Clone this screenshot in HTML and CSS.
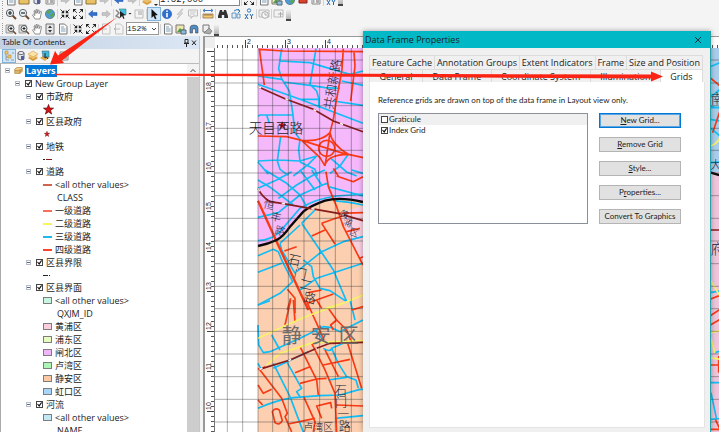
FILE: index.html
```html
<!DOCTYPE html>
<html lang="en">
<head>
<meta charset="utf-8">
<title>Data Frame Properties</title>
<link rel="stylesheet" href="styles.css">
</head>
<body>
<svg class="defs" aria-hidden="true">
  <symbol id="zin" viewBox="0 0 12 12"><path d="M7 7l4 4" stroke="#6b4a2e" stroke-width="2"/><circle cx="5" cy="5" r="3.6" fill="#e8f4fa" stroke="#555"/><path d="M3 5h4M5 3v4" stroke="#222" stroke-width="1.2"/></symbol>
  <symbol id="zout" viewBox="0 0 12 12"><path d="M7 7l4 4" stroke="#6b4a2e" stroke-width="2"/><circle cx="5" cy="5" r="3.6" fill="#e8f4fa" stroke="#666"/><path d="M3 5h4" stroke="#222" stroke-width="1.2"/></symbol>
  <symbol id="hand" viewBox="0 0 12 12"><path d="M4 11L1.500 7l1-.8L4 7.500 3 3l1-.5 1 3V1.500h1.200v3.700L7.200 2l1 .2-.2 3.500 1.500-2.500 1 .5L9 11z" fill="#fff" stroke="#777" stroke-width=".8"/></symbol>
  <symbol id="globe" viewBox="0 0 12 12"><circle cx="6" cy="6" r="4.600" fill="#4c9bd8" stroke="#4a6a80" stroke-width=".7"/><path d="M3 3q3-2 4 0L6 5 4 6 2 5zM6 7l3-2 1 2-2 3-1-.5z" fill="#5aa84a"/></symbol>
  <symbol id="shrink" viewBox="0 0 12 12"><path d="M1.500 1.500l3 3M10.500 1.500l-3 3M1.500 10.500l3-3M10.500 10.500l-3-3" stroke="#333"/><path d="M5.200 2v3.200H2zM6.800 2v3.200H10zM5.200 10V6.800H2zM6.800 10V6.800H10z" fill="#222"/></symbol>
  <symbol id="grow" viewBox="0 0 12 12"><path d="M2 2l3 3M10 2L7 5M2 10l3-3M10 10L7 7" stroke="#555"/><path d="M1 1h3.500L1 4.500zM11 1H7.500L11 4.500zM1 11h3.500L1 7.500zM11 11H7.500L11 7.500z" fill="#222"/></symbol>
  <symbol id="back" viewBox="0 0 12 12"><path d="M1.500 6l4-3.500v2H10v3H5.500v2z" fill="#2f6fd0" stroke="#1d4fa0" stroke-width=".5"/></symbol>
  <symbol id="fwd" viewBox="0 0 12 12"><path d="M10.500 6l-4-3.500v2H2v3h4.500v2z" fill="#c4c4c4" stroke="#aaa" stroke-width=".5"/></symbol>
  <symbol id="selfeat" viewBox="0 0 12 12"><path d="M1 2l3 3-3 3 4 2" fill="none" stroke="#888" stroke-width="1.500"/><path d="M4 1h7v6H8z" fill="#42c3e0" stroke="#3a7f90" stroke-width=".6"/><path d="M5 3v7l2-2 1.500 3 1-.5L8.300 7.600 10.500 7z" fill="#222"/></symbol>
  <symbol id="clear" viewBox="0 0 12 12"><path d="M2 2h8v8H2z" fill="#f5f5f5" stroke="#bbb"/><path d="M5 3h4v4H5z" fill="#ccc"/></symbol>
  <symbol id="cursor" viewBox="0 0 12 12"><path d="M3.500 1v9l2-2 1.500 3.300 1.500-.7-1.500-3.200 2.800-.3z" fill="#111"/></symbol>
  <symbol id="info" viewBox="0 0 12 12"><circle cx="6" cy="6" r="4.700" fill="#2f6fd0" stroke="#24559f" stroke-width=".5"/><path d="M6 2.500v1.600M6 5v4.200" stroke="#fff" stroke-width="1.600"/></symbol>
  <symbol id="bolt" viewBox="0 0 12 12"><path d="M8 1L3 6.500h2.500L3 11l6-6H6.500L9 1z" fill="#d6d6d6" stroke="#b5b5b5" stroke-width=".5"/></symbol>
  <symbol id="bubble" viewBox="0 0 12 12"><path d="M1.500 2h9v6H6l-2 2.500V8H1.500z" fill="#f3f3f3" stroke="#bbb"/><path d="M3 4h6M3 6h5" stroke="#ccc"/></symbol>
  <symbol id="measure" viewBox="0 0 12 12"><path d="M1 2.500h10M3 1L1 2.500 3 4M9 1l2 1.500L9 4" fill="none" stroke="#3b7cc4"/><path d="M1 6h10v4H1z" fill="#f0c878" stroke="#8a6a3a" stroke-width=".7"/><path d="M3 6v2M5 6v2M7 6v2M9 6v2" stroke="#6a4a2a" stroke-width=".6"/></symbol>
  <symbol id="binoc" viewBox="0 0 12 12"><path d="M3 2h2l.5 2h1L7 2h2l2 6v2H7.200V7H4.800v3H1V8z" fill="#333"/></symbol>
  <symbol id="route" viewBox="0 0 12 12"><path d="M2 5h4v5H2zM7 6h3v4H7z" fill="#e6eef5" stroke="#4b86b8" stroke-width=".8"/><path d="M4 3q3-3 6 0M8 1l2 2-2 2" fill="none" stroke="#2f7bc4"/></symbol>
  <symbol id="xy" viewBox="0 0 12 12"><circle cx="6" cy="2.500" r="1.700" fill="none" stroke="#2b7bbf"/><path d="M2 6l3 5M5 6l-3 5M7 6l1.500 2.500L10 6M8.500 8v3" fill="none" stroke="#1f68b0"/></symbol>
  <symbol id="clock" viewBox="0 0 12 12"><path d="M1 2h10v7H1z" fill="#eee" stroke="#bbb"/><circle cx="7" cy="7" r="3.300" fill="#f8f8f8" stroke="#aaa"/><path d="M7 5v2h2" fill="none" stroke="#aaa"/></symbol>
  <symbol id="newwin" viewBox="0 0 12 12"><path d="M1 2h9v7H1z" fill="#f3f3f3" stroke="#bbb"/><path d="M5 6h5M7.500 4v5" stroke="#aaa"/></symbol>
  <symbol id="pzin" viewBox="0 0 12 12"><path d="M1 2h7v8H1z" fill="#ddd" stroke="#888" stroke-width=".8"/><circle cx="6" cy="5.500" r="3" fill="#eef6fa" stroke="#555"/><path d="M8 8l3 3" stroke="#6b4a2e" stroke-width="1.600"/><path d="M4.500 5.500h3M6 4v3" stroke="#222"/></symbol>
  <symbol id="page" viewBox="0 0 12 12"><path d="M2.500 1h5l2.500 2.500V11H2.500z" fill="#fafafa" stroke="#777"/><path d="M4 4h3M4 6h4.500M4 8h4.500" stroke="#7fa0bd"/></symbol>
  <symbol id="pageg" viewBox="0 0 12 12"><path d="M2.500 1h5l2.500 2.500V11H2.500z" fill="#f4f4f4" stroke="#c3c3c3"/><path d="M7 6H1M3 4L1 6l2 2" fill="none" stroke="#bbb"/></symbol>
  <symbol id="pagefit" viewBox="0 0 12 12"><path d="M2 1h8v10H2z" fill="#e6e6e6" stroke="#777"/><path d="M6 2.500L8 5H4zM6 9.500L8 7H4z" fill="#333"/></symbol>
  <symbol id="pic" viewBox="0 0 12 12"><path d="M1 2h8v8H1z" fill="#f2e6b0" stroke="#777"/><path d="M2 9l3-4 2 2 2-2v4z" fill="#4fa04a"/><path d="M6 7h5v4H6z" fill="#8db9dd" stroke="#567"/></symbol>
  <symbol id="mag" viewBox="0 0 12 12"><path d="M2 10V5q0-3 4-3t4 3v5H7.500V6h-3v4z" fill="#4d8fc4" stroke="#445" stroke-width=".6"/></symbol>
  <symbol id="tool" viewBox="0 0 12 12"><path d="M2 2h6v7H2z" fill="#eee" stroke="#777"/><path d="M3 10l5-5 3 3-2 3z" fill="#aaa" stroke="#666" stroke-width=".6"/></symbol>
  <symbol id="tree" viewBox="0 0 12 12"><path d="M2 1h3v3H2zM5 5h3v3H5z" fill="#f2c66a" stroke="#b98a3a" stroke-width=".6"/><path d="M3 4v6h3M3 7h2M8 10h3M9 3h2" fill="none" stroke="#888" stroke-width=".8"/></symbol>
  <symbol id="cyl" viewBox="0 0 12 12"><path d="M3 3v6q3 2 6 0V3z" fill="#dfe4ec" stroke="#667"/><ellipse cx="6" cy="3" rx="3" ry="1.500" fill="#f8f8f8" stroke="#667"/><path d="M6 6h3v4H6z" fill="#555f9a"/></symbol>
  <symbol id="layers" viewBox="0 0 12 12"><path d="M1 8l5-3 5 3-5 3z" fill="#d79a35"/><path d="M1 6l5-3 5 3-5 3z" fill="#efc473"/><path d="M1 4l5-3 5 3-5 3z" fill="#fbe3a8" stroke="#c8923a" stroke-width=".5"/></symbol>
  <symbol id="sel" viewBox="0 0 12 12"><path d="M1 8l4-3 6 2-5 4z" fill="#e0aa50"/><path d="M3 1h7v6H4z" fill="#42b8d8" stroke="#3a6f80" stroke-width=".6"/><path d="M6 3v5l1.500-1L9 9" fill="none" stroke="#222"/></symbol>
  <symbol id="opts" viewBox="0 0 12 12"><path d="M2 2h8v8H2z" fill="#f4f4f4" stroke="#888"/><path d="M3 4h1.500M6 4h3M3 6h1.500M6 6h3M3 8h1.500M6 8h3" stroke="#666"/></symbol>
  <symbol id="frame" viewBox="0 0 12 12"><path d="M1 4l3-2h7v5L8 10H1z" fill="#f2cf86" stroke="#a8772b" stroke-width=".8"/><path d="M1 6h7l3-2M1 8h7l3-2M8 4v6" fill="none" stroke="#a8772b" stroke-width=".8"/></symbol>
  <symbol id="star" viewBox="0 0 12 12"><path d="M6 .5l1.400 3.900 4.100.1-3.300 2.500 1.200 4L6 8.600 2.600 11l1.200-4L.5 4.500l4.100-.1z" fill="#e01010" stroke="#400" stroke-width=".7"/></symbol>
  <symbol id="folder" viewBox="0 0 12 12"><path d="M1 3h4l1 1h5v6H1z" fill="#e9c268" stroke="#8f7335"/></symbol>
</svg>

<div class="app">
  <header class="toolbars">
    <div class="bar bar-top">
      <i class="grip"></i>
      <button aria-label="New"><svg><use href="#page"/></svg></button>
      <button aria-label="Open"><svg><use href="#folder"/></svg></button>
      <button aria-label="Save"><svg><use href="#cyl"/></svg></button>
      <button aria-label="Print"><svg><use href="#opts"/></svg></button>
      <i class="sep"></i>
      <button aria-label="Cut"><svg><use href="#fwd"/></svg></button>
      <button aria-label="Copy"><svg><use href="#page"/></svg></button>
      <button aria-label="Paste"><svg><use href="#folder"/></svg></button>
      <button aria-label="Delete"><svg><use href="#fwd"/></svg></button>
      <i class="sep"></i>
      <button aria-label="Undo"><svg><use href="#back"/></svg></button>
      <button aria-label="Redo"><svg><use href="#fwd"/></svg></button>
      <i class="sep"></i>
      <button aria-label="Add data"><svg><use href="#layers"/></svg></button>
      <i class="drop"></i>
      <input class="scale" aria-label="Map scale" value="1:32,000">
      <i class="sep"></i>
      <button aria-label="Editor"><svg><use href="#grow"/></svg></button>
      <i class="sep"></i>
      <button aria-label="Contents"><svg><use href="#page"/></svg></button>
      <button aria-label="Catalog"><svg><use href="#pic"/></svg></button>
      <button aria-label="Search"><svg><use href="#globe"/></svg></button>
      <button aria-label="Toolbox"><svg viewBox="0 0 12 12"><path d="M2 4h8v5H2z" fill="#d8432c" stroke="#822"/></svg></button>
      <button aria-label="Python"><svg><use href="#opts"/></svg></button>
      <i class="sep"></i>
      <button aria-label="Model"><svg><use href="#xy"/></svg></button>
      <i class="more"></i>
    </div>
    <div class="bar">
      <i class="grip"></i>
      <button aria-label="Zoom in"><svg><use href="#zin"/></svg></button>
      <button aria-label="Zoom out"><svg><use href="#zout"/></svg></button>
      <button aria-label="Pan"><svg><use href="#hand"/></svg></button>
      <button aria-label="Full extent"><svg><use href="#globe"/></svg></button>
      <i class="sep"></i>
      <button aria-label="Fixed zoom in"><svg><use href="#shrink"/></svg></button>
      <button aria-label="Fixed zoom out"><svg><use href="#grow"/></svg></button>
      <i class="sep"></i>
      <button aria-label="Back"><svg><use href="#back"/></svg></button>
      <button aria-label="Forward"><svg><use href="#fwd"/></svg></button>
      <i class="sep"></i>
      <button aria-label="Select features"><svg><use href="#selfeat"/></svg></button>
      <i class="drop"></i>
      <button aria-label="Clear selection"><svg><use href="#clear"/></svg></button>
      <i class="sep"></i>
      <button class="on" aria-label="Select elements"><svg><use href="#cursor"/></svg></button>
      <button aria-label="Identify"><svg><use href="#info"/></svg></button>
      <button aria-label="Hyperlink"><svg><use href="#bolt"/></svg></button>
      <button aria-label="HTML popup"><svg><use href="#bubble"/></svg></button>
      <i class="sep"></i>
      <button aria-label="Measure"><svg><use href="#measure"/></svg></button>
      <i class="sep"></i>
      <button aria-label="Find"><svg><use href="#binoc"/></svg></button>
      <button aria-label="Find route"><svg><use href="#route"/></svg></button>
      <button aria-label="Go to XY"><svg><use href="#xy"/></svg></button>
      <i class="sep"></i>
      <button aria-label="Time slider"><svg><use href="#clock"/></svg></button>
      <i class="sep"></i>
      <button aria-label="Viewer window"><svg><use href="#newwin"/></svg></button>
      <i class="more"></i>
    </div>
    <div class="bar">
      <i class="grip"></i>
      <button aria-label="Layout zoom in"><svg><use href="#pzin"/></svg></button>
      <button aria-label="Layout zoom out"><svg><use href="#pzin"/></svg></button>
      <button aria-label="Layout pan"><svg><use href="#hand"/></svg></button>
      <button aria-label="Whole page"><svg><use href="#pagefit"/></svg></button>
      <button aria-label="Actual size"><svg><use href="#page"/></svg></button>
      <i class="sep"></i>
      <button aria-label="Page zoom in"><svg><use href="#shrink"/></svg></button>
      <button aria-label="Page zoom out"><svg><use href="#grow"/></svg></button>
      <i class="sep"></i>
      <button aria-label="Previous extent"><svg><use href="#pageg"/></svg></button>
      <button aria-label="Next extent"><svg><use href="#pageg"/></svg></button>
      <select class="zoom" aria-label="Layout zoom"><option>152%</option></select>
      <i class="sep"></i>
      <button aria-label="Draft mode"><svg><use href="#page"/></svg></button>
      <button aria-label="Focus data frame"><svg><use href="#pic"/></svg></button>
      <button aria-label="Change layout"><svg><use href="#mag"/></svg></button>
      <button aria-label="Data driven pages"><svg><use href="#tool"/></svg></button>
      <i class="more"></i>
    </div>
  </header>

  <div class="workspace">
    <aside class="toc">
      <div class="toc-title"><span>Table Of Contents</span>
        <svg class="pin" viewBox="0 0 14 8"><path d="M2 .5h3V4H2zM1 4.500h5M3.500 5v3" fill="none" stroke="#222"/><path d="M9 1.500l4 4.500M13 1.500L9 6" stroke="#222"/></svg>
      </div>
      <div class="toc-tools">
        <button class="on" aria-label="List by drawing order"><svg><use href="#tree"/></svg></button>
        <button aria-label="List by source"><svg><use href="#cyl"/></svg></button>
        <button aria-label="List by visibility"><svg><use href="#layers"/></svg></button>
        <button aria-label="List by selection"><svg><use href="#sel"/></svg></button>
        <i class="sep"></i>
        <button aria-label="Options"><svg><use href="#opts"/></svg></button>
      </div>
      <div class="toc-body">
        <ul class="tree">
          <li class="l0"><i class="exp"></i><svg class="ico"><use href="#frame"/></svg><b class="picked">Layers</b></li>
          <li class="l1"><i class="exp"></i><label><input type="checkbox" checked>New Group Layer</label></li>
          <li class="l2"><i class="exp"></i><label><input type="checkbox" checked>市政府</label></li>
          <li class="sym"><svg class="big"><use href="#star"/></svg></li>
          <li class="l2"><i class="exp"></i><label><input type="checkbox" checked>区县政府</label></li>
          <li class="sym"><svg class="small"><use href="#star"/></svg></li>
          <li class="l2"><i class="exp"></i><label><input type="checkbox" checked>地铁</label></li>
          <li class="sym"><i class="line metro"></i></li>
          <li class="l2"><i class="exp"></i><label><input type="checkbox" checked>道路</label></li>
          <li class="l3"><i class="line brick"></i>&lt;all other values&gt;</li>
          <li class="field">CLASS</li>
          <li class="l3"><i class="line coral"></i>一级道路</li>
          <li class="l3"><i class="line yellow"></i>二级道路</li>
          <li class="l3"><i class="line cyan"></i>三级道路</li>
          <li class="l3"><i class="line red"></i>四级道路</li>
          <li class="l2"><i class="exp"></i><label><input type="checkbox" checked>区县界限</label></li>
          <li class="sym"><i class="line bound"></i></li>
          <li class="l2"><i class="exp"></i><label><input type="checkbox" checked>区县界面</label></li>
          <li class="l3"><i class="fill mint"></i>&lt;all other values&gt;</li>
          <li class="field">QXJM_ID</li>
          <li class="l3"><i class="fill pink"></i>黄浦区</li>
          <li class="l3"><i class="fill lime"></i>浦东区</li>
          <li class="l3"><i class="fill violet"></i>闸北区</li>
          <li class="l3"><i class="fill green"></i>卢湾区</li>
          <li class="l3"><i class="fill peach"></i>静安区</li>
          <li class="l3"><i class="fill sky"></i>虹口区</li>
          <li class="l2"><i class="exp"></i><label><input type="checkbox" checked>河流</label></li>
          <li class="l3"><i class="fill water"></i>&lt;all other values&gt;</li>
          <li class="field">NAME</li>
        </ul>
        <div class="scroll"><svg viewBox="0 0 12 12"><path d="M3.500 7.500L6 5l2.500 2.500" fill="none" stroke="#444"/></svg></div>
      </div>
    </aside>

    <main class="layout-view">
      <svg class="ruler-h">
        <defs><pattern id="th" width="5" height="12" x="2" patternUnits="userSpaceOnUse"><path d="M.5 8v3" stroke="#555"/></pattern></defs>
        <rect x="10" width="100%" height="11" fill="#fff"/><rect x="10" width="100%" height="11" fill="url(#th)"/>
        <path d="M40.500 3v8M80.500 3v8M120.500 3v8" stroke="#444"/>
        <g class="num"><text x="42" y="7">2</text><text x="82" y="7">3</text><text x="122" y="7">4</text></g>
      </svg>
      <div class="view-row">
        <svg class="ruler-v">
          <defs><pattern id="tv" width="9" height="5" y="3" patternUnits="userSpaceOnUse"><path d="M6 .5h3" stroke="#555"/></pattern></defs>
          <rect width="9" height="100%" fill="#fff"/><rect width="9" height="100%" fill="url(#tv)"/>
          <path d="M2 3.500h7M2 43.500h7M2 83.500h7M2 123.500h7M2 163.500h7M2 203.500h7M2 243.500h7M2 283.500h7M2 323.500h7M2 363.500h7" stroke="#444"/>
          <g class="num"><text transform="translate(6 42) rotate(-90)">18</text><text transform="translate(6 82) rotate(-90)">17</text><text transform="translate(6 122) rotate(-90)">16</text><text transform="translate(6 162) rotate(-90)">15</text><text transform="translate(6 202) rotate(-90)">14</text><text transform="translate(6 242) rotate(-90)">13</text><text transform="translate(6 282) rotate(-90)">12</text><text transform="translate(6 322) rotate(-90)">11</text><text transform="translate(6 362) rotate(-90)">10</text></g>
        </svg>
        <svg class="map" role="img" aria-label="Street map of Shanghai districts with index grid">
          <g transform="translate(-15 -12) scale(.33333)">
            <path d="M174 36H1600V1200H174z" fill="#fbcfb0"/>
            <path d="M174 36H1000V500L489 498Q420 482 375 494 330 510 310 527L270 572Q250 602 230 612 205 624 174 630z" fill="#f4b8fb"/>
            <path d="M415 532L450 612 489 687H520V500z" fill="#f9d0e0"/>
            <path d="M1500 36h100v376h-100z" fill="#a9cdeb"/>
            <path d="M1500 408h100v800h-100z" fill="#eec5da"/>

            <g class="street cyan-st">
              <path d="M245 38L236 98 245 128 268 165 278 230 285 290 300 310M174 120L245 130M348 38L330 145 350 165 357 190 356 215M240 75L330 80 380 95 450 115 489 105M174 145L300 190 489 262M250 138L330 148 375 155 420 157M300 190H357M425 135L489 148M400 195L489 208M174 241L180 237H278M200 237L208 262M242 302L232 375 240 400 265 418M174 375L235 372 300 375 350 360M174 378L205 415M300 310L296 340 300 375M300 378L345 400 352 420M350 360L325 385 280 420M390 365L440 408 470 420M445 355L420 390 390 412"/>
              <g transform="translate(0 402)">
                <path d="M174 212Q215 210 240 185L300 115Q350 85 410 78L489 72M174 142L235 128 300 75 380 40M174 30L215 55 280 105M174 55L230 30 275 5M195 0L260 40 300 75 320 110M300 0L345 60M335 0L365 45 385 40M375 0L340 15 290 45 235 85M385 50L489 78M455 0L489 10M400 92Q440 95 489 105M305 160L360 240 400 300 440 395M305 160L345 120M240 220L300 165M290 305L365 245 430 215 489 200M240 220L245 240 285 310M300 360L350 325 489 280M174 257L220 238 235 245 245 270 278 335 240 370 174 405M174 307L245 280M310 270L335 290 340 320 360 355 390 362 440 395"/>
              </g>
              <g transform="translate(0 792)">
                <path d="M174 15L210 2M174 75L176 135 190 158 210 155 300 115 370 80 392 82 420 95 489 60M215 105L240 150M220 190L270 290 310 396M220 205L325 155M260 185L305 265 290 275 300 290M174 325Q230 300 280 293L360 287 420 285 480 268H489M385 240L440 232M395 145L415 190 440 230 468 240 475 265M370 145Q390 158 395 145L430 130M405 355L489 347M450 0L465 60M345 90L370 120M174 190L182 205"/>
              </g>
              <path d="M1530 92L1560 80M1530 185L1560 160M1530 215H1560M1530 210L1545 214M1530 250L1560 255M1530 275L1560 300M1530 380L1560 378M1530 770L1560 765M1530 1040H1560M1533 1070L1550 1150M1530 1150L1560 1148M1545 950L1560 945"/>
            </g>
            <g class="street red-st">
              <path d="M178 38L193 147M178 40L250 45 489 47M430 38L426 100 408 200 400 250 390 290 375 390M462 50L465 90 452 195M174 300L260 302 305 313 440 355M305 313Q365 318 390 290 395 325 445 355L490 365M305 313L360 365 374 388Q385 355 445 355M400 397L415 420"/>
              <circle cx="380" cy="337" r="24"/>
              <g transform="translate(0 402)">
                <path d="M174 92L230 215 262 285 325 420" class="wide"/>
                <path d="M378 5L385 50 410 110 430 170 489 285M410 18L460 35 489 20M365 160L435 135M365 160L405 222M335 198L375 180M415 130L489 128M440 185L480 175M262 358L285 385V430M262 420L272 385M322 400L400 372M325 368L365 360M350 390L365 415M253 243L290 230M480 265L489 260"/>
              </g>
              <g transform="translate(0 792)">
                <path d="M174 205L180 210 245 295 262 340 255 350 275 396M174 255L190 280 215 268M174 300L188 315M272 0L255 75M280 0L285 65M318 0L350 70 372 120M385 25L410 60 392 75 400 90M410 60L440 90 455 130M440 120L485 265M335 130L375 210 405 280 410 396M300 140L330 200 350 240 355 285M285 218L330 200M300 250L350 237 380 235M375 150L400 200 415 230M370 195L450 178M312 292L345 365 340 396M265 372L345 355M365 355L350 318 392 308 395 325M410 315L489 318M455 30L489 20M217 335Q225 322 238 330L247 362Q238 378 225 368ZM180 210L195 200"/>
              </g>
              <path d="M1530 125L1560 150M1538 290L1560 225M1530 790L1560 778M1530 840L1560 820M1530 868L1560 850M1530 987H1560M1556 960V1010M1530 1180H1560M1546 1150L1560 1180"/>
            </g>
            <g class="street yellow-st">
              <path d="M375 817L430 802 489 777M174 907L260 867 330 837 450 794M200 987L240 952 340 920 489 914M1530 330Q1550 325 1560 305M1530 730L1560 780M1530 890L1560 884M1530 900L1545 950M1530 965L1560 970"/>
            </g>
            <path class="county" d="M174 630Q205 624 230 612 250 602 270 572L310 527Q330 510 375 494 420 482 489 498M1530 409L1560 418"/>
            <g class="rail">
              <path d="M174 152L255 188 340 220 400 255 489 287M174 457Q185 482 210 497L245 502 330 517 415 532 489 554M178 1000L270 972 350 937 390 922 489 919M1530 582H1560"/>
              <path class="dash" d="M174 152L255 188 340 220 400 255 489 287M174 457Q185 482 210 497L245 502 330 517 415 532 489 554M178 1000L270 972 350 937"/>
            </g>

            <path class="index" d="M82 36V1200M128 36V1200M174 36V1200M218 36V1200M265 36V1200M312 36V1200M359 36V1200M406 36V1200M454 36V1200M43 72H1600M43 141H1600M43 209H1600M43 277H1600M43 343H1600M43 411H1600M43 479H1600M43 547H1600M43 615H1600M43 683H1600M43 751H1600M43 818H1600M43 886H1600M43 954H1600M43 1022H1600M43 1090H1600M43 1158H1600"/>

            <use href="#star" x="235" y="256" width="24" height="24"/>
            <g class="names">
              <text x="146" y="292" font-size="41">天目西路</text>
              <text transform="translate(398 222) rotate(-80)" font-size="38">共和新路</text>
              <text x="188 210 222" y="514 550 592" rotate="15" font-size="32">恒丰路</text>
              <text x="262 280 298 308" y="682 722 756 796" rotate="12" font-size="38">石门二路</text>
              <text x="416 426 446" y="540 564 594" rotate="20" font-size="28">黄浦区</text>
              <text x="310" y="1184" font-size="30">卢湾区</text>
              <text x="405 405 412 416" y="1078 1114 1150 1186" font-size="36">石门一路</text>
              <text class="district" x="245 332 416" y="922" font-size="60">静安区</text>
              <text x="1532" y="200" font-size="38">南</text>
              <text x="1530" y="400" font-size="34">大</text>
              <text x="1532" y="654" font-size="40">府</text>
            </g>
          </g>
        </svg>
      </div>
    </main>
  </div>
</div>

<section class="dialog" role="dialog" aria-labelledby="dlg-title">
  <header class="dlg-head"><h1 id="dlg-title">Data Frame Properties</h1>
    <button aria-label="Close"><svg viewBox="0 0 8 8"><path d="M1 1l6 6M7 1L1 7" stroke="#123" stroke-width=".9"/></svg></button></header>
  <div class="sheet">
    <div class="tabs back" role="tablist">
      <button role="tab">Feature Cache</button><button role="tab">Annotation Groups</button><button role="tab">Extent Indicators</button><button role="tab">Frame</button><button role="tab">Size and Position</button>
    </div>
    <div class="tabs front" role="tablist">
      <button role="tab">General</button><button role="tab">Data Frame</button><button role="tab">Coordinate System</button><button role="tab">Illumination</button><button role="tab" class="active" aria-selected="true">Grids</button>
    </div>
    <div class="page">
      <p>Reference grids are drawn on top of the data frame in Layout view only.</p>
      <div class="cols">
        <div class="grids">
          <label class="cur"><input type="checkbox">Graticule</label>
          <label><input type="checkbox" checked>Index Grid</label>
        </div>
        <div class="actions">
          <button class="default"><u>N</u>ew Grid...</button>
          <button><u>R</u>emove Grid</button>
          <button><u>S</u>tyle...</button>
          <button>P<u>r</u>operties...</button>
          <button>Convert To Graphics</button>
        </div>
      </div>
    </div>
  </div>
</section>

<svg class="callouts" aria-hidden="true">
  <g fill="#fb2414">
    <path d="M117.500 17L62 60.500 64 63 50 64.500 55 51 58 55.500z"/>
    <path d="M55 73.800L360 73.800 651 74.500V71.500L663 76.500 651 81.500V78.500L360 76.800 55 75.200z"/>
  </g>
</svg>
</body>
</html>
```
FILE: styles.css
```css
* { box-sizing: border-box; }

html, body { height: 100%; }

body {
  margin: 0;
  overflow: hidden;
  background: #f3f3f3;
  color: #1c1c1c;
  font: 9px/13px "Open Sans", "Noto Sans CJK SC", sans-serif;
}

button, input, select { margin: 0; padding: 0; font: inherit; color: inherit; }
button { border: 0; background: none; }
i { flex: none; }

.defs { position: absolute; width: 0; height: 0; }

.app { display: flex; flex-direction: column; height: 100%; }

/* toolbars */
.toolbars { flex: none; background: #f4f4f4; }
.bar { display: flex; align-items: center; gap: 1px; height: 15px; padding-left: 2px; }
.bar-top { height: 6px; align-items: flex-end; overflow: hidden; }
.bar button, .toc-tools button { flex: none; width: 12px; height: 12px; }
.bar svg, .toc-tools svg { display: block; width: 12px; height: 12px; }
.bar .on, .toc-tools .on { background: #cfe6f8; box-shadow: 0 0 0 1px #7fb2dc; }
.grip { width: 2px; height: 11px; border-left: 1px dotted #999; }
.sep { width: 1px; height: 10px; background: #d2d2d2; }
.drop { width: 4px; height: 2px; background: #222; clip-path: polygon(0 0, 100% 0, 50% 100%); }
.more { align-self: flex-end; width: 5px; height: 11px; background: linear-gradient(#eee, #b5b5b5); border-bottom: 2px solid #444; }
.scale { flex: none; width: 81px; height: 12px; border: 1px solid #888; background: #fff; font: 9px/10px "Liberation Mono", monospace; }
.zoom {
  flex: none;
  width: 33px;
  height: 13px;
  border: 1px solid #999;
  font: 8px/11px "Liberation Mono", monospace;
  appearance: none;
  background: #fff url("data:image/svg+xml,%3Csvg xmlns='http://www.w3.org/2000/svg' width='8' height='8'%3E%3Cpath d='M2 3l2 2 2-2' fill='none' stroke='%23444'/%3E%3C/svg%3E") no-repeat right center;
}

/* panels */
.workspace { display: flex; flex: 1; min-height: 0; }
.toc { display: flex; flex-direction: column; flex: none; width: 200px; border-right: 1px solid #c6c6c6; }
.toc-title { display: flex; align-items: center; justify-content: space-between; flex: none; height: 13px; padding: 0 2px; background: linear-gradient(90deg, #c3d1e1, #dbe7f4); font-family: Lato, sans-serif; font-size: 8px; }
.pin { width: 14px; height: 8px; }
.toc-tools { display: flex; align-items: center; flex: none; height: 14px; padding-left: 3px; background: #f3f3f3; }
.toc-tools .sep { margin: 0 2px 0 4px; }
.toc-body { display: flex; flex: 1; min-height: 0; border-top: 1px solid #bbb; border-left: 1px solid #aaa; background: #fff; }
.tree { flex: 1; margin: 0; padding: 0; list-style: none; white-space: nowrap; overflow: hidden; }
.tree li { display: flex; align-items: center; height: 13px; }
.tree .sym { height: 12px; padding-left: 42px; }
.tree label { display: flex; align-items: center; }
.tree input { margin-right: 3px; }
.l0 { padding-left: 4px; }
.l1 { padding-left: 14px; }
.l2 { padding-left: 25px; }
.l3 { padding-left: 42px; }
.field { padding-left: 56px; }
.exp { width: 5px; height: 5px; margin-right: 5px; border: 1px solid #b5bcc8; }
.exp::after { content: ""; display: block; width: 3px; height: 1px; margin-top: 1px; background: #667; }
.l0 .exp { margin-right: 4px; }
.ico { width: 9px; height: 9px; margin-right: 2px; }
.picked { padding: 0 1px; background: #0078d7; color: #fff; line-height: 12px; }
.big { width: 11px; height: 11px; }
.small { width: 6px; height: 6px; margin-left: 1px; }
.line { width: 9px; height: 2px; margin-right: 3px; }
.fill { width: 9px; height: 7px; margin-right: 3px; border: 1px solid #7d7d7d; }
.metro { background: linear-gradient(90deg, #222 2px, #fff 2px, #fff 3px, #8c1a1a 3px); }
.bound { background: linear-gradient(90deg, #222 5px, #fff 5px, #fff 6px, #222 6px, #222 7px, #fff 7px); }
.metro, .bound { height: 1px; }
.brick { background: #d0654f; }
.coral { background: #f4705a; }
.yellow { background: #f8f35e; }
.cyan { background: #22b8ee; }
.red { background: #fa452c; }
.mint { background: #c6f7e0; }
.pink { background: #fccde0; }
.lime { background: #e9fcc0; }
.violet { background: #f0b6fc; }
.green { background: #acf5b4; }
.peach { background: #fbc9a4; }
.sky { background: #a9d5fb; }
.water { background: #c2e8f4; }
.scroll { flex: none; width: 12px; background: #cdcdcd; }
.scroll svg { display: block; width: 12px; height: 13px; background: #f3f3f3; }

input[type="checkbox"] { flex: none; width: 7px; height: 7px; border: 1px solid #444; background: #fff; appearance: none; }
input[type="checkbox"]:checked::before {
  content: "";
  display: block;
  width: 5px;
  height: 5px;
  background: #111;
  clip-path: polygon(0 40%, 20% 35%, 40% 60%, 85% 0, 100% 15%, 45% 100%);
}

/* layout view */
.layout-view { display: flex; flex-direction: column; flex: 1; min-width: 0; margin-left: 3px; border-top: 1px solid #999; border-left: 2px solid #999; background: #eee; }
.ruler-h { flex: none; width: 100%; height: 11px; background: #eee; }
.view-row { display: flex; flex: 1; min-height: 0; }
.ruler-v { flex: none; width: 9px; height: 100%; }
.num { font: 7px "Liberation Sans", sans-serif; fill: #222; }
.map { flex: 1; min-width: 0; height: 100%; border-left: 1px solid #777; background: #fff; }
.street { fill: none; stroke-width: 5; stroke-linejoin: round; }
.cyan-st { stroke: #12bdf6; }
.red-st { stroke: #f93a14; }
.red-st .wide { stroke-width: 7; }
.yellow-st { stroke: #f8f26a; }
.county { fill: none; stroke: #0a0a0a; stroke-width: 7; }
.rail { fill: none; stroke: #8a1c1c; stroke-width: 5; }
.rail .dash { stroke: #f5eeee; stroke-dasharray: 10 80; }
.index { fill: none; stroke: #333; stroke-opacity: .6; stroke-width: 2; }
.names { font-family: "Noto Sans CJK SC", sans-serif; font-weight: 300; fill: #20202c; }
.names .district { font-weight: 400; fill: #6f6b6b; }

/* dialog window */
.dialog { position: absolute; top: 31px; right: 8px; bottom: 0; left: 363px; display: flex; flex-direction: column; border-right: 1px solid #26a0a8; background: #f0f0f0; box-shadow: 0 0 5px rgba(0, 0, 0, .35); }
.dlg-head { display: flex; align-items: center; justify-content: space-between; flex: none; height: 17px; padding: 0 8px 0 2px; background: #00b8c6; }
.dlg-head h1 { margin: 0; font-size: 9px; font-weight: 400; }
.dlg-head button { width: 8px; height: 8px; }
.dlg-head svg { display: block; }
.sheet { display: flex; flex: 1; flex-direction: column; padding: 7px 5px 4px 6px; }
.tabs { display: flex; flex: none; margin-right: 2px; }
.tabs button { flex: 1 1 auto; height: 14px; border: 1px solid #dcdcdc; border-width: 1px 1px 0 0; line-height: 13px; white-space: nowrap; }
.tabs button:first-child { border-left-width: 1px; }
.tabs.front button { height: 13px; }
.tabs.front .active { background: #fff; }
.page { flex: 1; padding: 13px 23px 0 8px; border: 1px solid #e4e4e4; border-top: 0; background: #fff; font: 8px/11px Lato, sans-serif; }
.page p { margin: 0 0 7px; white-space: nowrap; }
.cols { display: flex; gap: 11px; }
.grids { flex: 1; border: 1px solid #8a8f99; }
.grids label { display: flex; align-items: center; gap: 1px; height: 11px; padding-left: 2px; }
.grids .cur { background: #f0f0f0; }
.actions { display: flex; flex-direction: column; gap: 9px; flex: none; width: 82px; }
.actions button { height: 15px; border: 1px solid #b4b4b4; background: #e1e1e1; white-space: nowrap; }
.actions .default { border: 1px solid #0078d7; box-shadow: inset 0 0 0 1px #5aa5e2; }

.callouts { position: absolute; inset: 0; width: 100%; height: 100%; pointer-events: none; }
```
